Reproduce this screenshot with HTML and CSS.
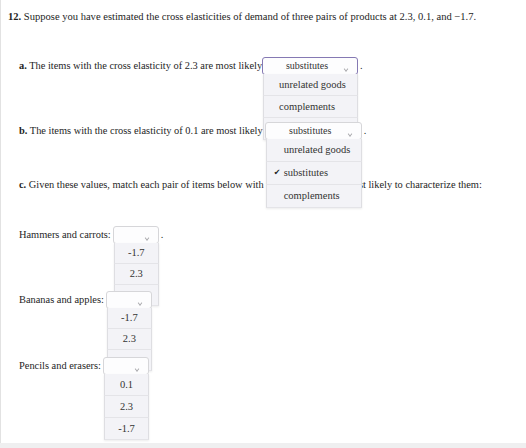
FILE: index.html
```html
<!DOCTYPE html>
<html>
<head>
<meta charset="utf-8">
<link rel="stylesheet" href="styles.css">
</head>
<body>
<div class="page">
  <p class="q"><b>12.</b> Suppose you have estimated the cross elasticities of demand of three pairs of products at 2.3, 0.1, and &minus;1.7.</p>

  <div class="row ra">
    <span><b>a.</b> The items with the cross elasticity of 2.3 are most likely</span>
    <span class="sel wide focus">substitutes<i class="chev"></i>
      <span class="menu">
        <span class="opt">unrelated goods</span>
        <span class="opt">complements</span>
        <span class="opt"></span>
      </span>
    </span><span class="dot">.</span>
  </div>

  <div class="row rb">
    <span><b>b.</b> The items with the cross elasticity of 0.1 are most likely</span>
    <span class="sel wide b">substitutes<i class="chev"></i>
      <span class="menu">
        <span class="opt">unrelated goods</span>
        <span class="opt checked"><span class="check">✔</span>substitutes</span>
        <span class="opt">complements</span>
      </span>
    </span><span class="dot">.</span>
  </div>

  <div class="row rc">
    <span><b>c.</b> Given these values, match each pair of items below with the cross elasticity most likely to characterize them:</span>
  </div>

  <div class="row rh">
    <span>Hammers and carrots:</span>
    <span class="sel narrow"><i class="chev"></i>
      <span class="menu num">
        <span class="opt">-1.7</span>
        <span class="opt">2.3</span>
        <span class="opt"></span>
      </span>
    </span><span class="dot">.</span>
  </div>

  <div class="row rba">
    <span>Bananas and apples:</span>
    <span class="sel narrow"><i class="chev"></i>
      <span class="menu num">
        <span class="opt">-1.7</span>
        <span class="opt">2.3</span>
        <span class="opt"></span>
      </span>
    </span>
  </div>

  <div class="row rp">
    <span>Pencils and erasers:</span>
    <span class="sel narrow"><i class="chev"></i>
      <span class="menu num">
        <span class="opt">0.1</span>
        <span class="opt">2.3</span>
        <span class="opt">-1.7</span>
      </span>
    </span>
  </div>
</div>
</body>
</html>
```

FILE: styles.css
```css
html, body {
  margin: 0;
  padding: 0;
  background: #efeff0;
}

body {
  font-family: "Liberation Serif", "Times New Roman", serif;
  font-size: 10.4px;
  color: #1e1e1e;
}

.page {
  box-sizing: border-box;
  width: 526px;
  height: 443px;
  background: #fff;
  border-left: 1px solid #e2e2e2;
  box-shadow: 0 1px 2px rgba(0, 0, 0, 0.18);
  padding: 10px 0 0 7px;
  overflow: hidden;
}

.q {
  margin: 0;
  line-height: 14px;
  font-size: 10.55px;
}

.row {
  display: flex;
  align-items: center;
  height: 18px;
  margin-left: 11px;
  line-height: 14px;
  white-space: nowrap;
}

.ra { margin-top: 33px; }
.rb { margin-top: 47px; }
.rc { margin-top: 36px; }
.rh { margin-top: 32px; }
.rba { margin-top: 47px; }
.rp { margin-top: 48px; }

.sel {
  position: relative;
  box-sizing: border-box;
  display: inline-flex;
  align-items: center;
  justify-content: center;
  height: 18px;
  border: 1px solid #d6d6d9;
  border-radius: 3px;
  background: #fdfdfe;
  color: #333;
  padding-right: 6px;
  font-size: 10px;
}

.wide { width: 96px; margin-left: 0; }
.wide.b { width: 97px; margin-left: 2px; }
.narrow { width: 46px; margin-left: 2px; }

.focus {
  border-color: #8579b3;
}

.chev {
  position: absolute;
  right: 9px;
  top: 9px;
  width: 3px;
  height: 3px;
  border-right: 1px solid #a8a8ac;
  border-bottom: 1px solid #a8a8ac;
  transform: scaleX(0.8) rotate(45deg);
}

.dot {
  margin-left: 2px;
}

.menu {
  position: absolute;
  top: 100%;
  left: 0;
  right: -1px;
  display: flex;
  flex-direction: column;
  box-shadow: 0 1px 2px rgba(0, 0, 0, 0.08);
}

.opt {
  position: relative;
  box-sizing: border-box;
  height: 22px;
  display: flex;
  align-items: center;
  padding-left: 15px;
  background: #f3f3f7;
  border-left: 1px solid #dedee2;
  border-right: 1px solid #dedee2;
  border-bottom: 1px solid #e4e4e8;
  color: #333;
  font-size: 10.5px;
}

.rb .opt {
  height: 23px;
  padding-left: 17px;
}

.check {
  position: absolute;
  left: 7px;
  font-family: "DejaVu Sans", sans-serif;
  font-size: 8px;
  color: #222;
}

.num .opt {
  justify-content: center;
  padding-left: 0;
  height: 21px;
}

.rp .num .opt {
  height: 22px;
}
```
